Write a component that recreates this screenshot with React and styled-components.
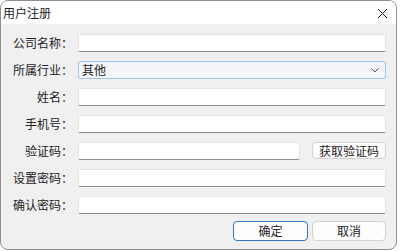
import { Fragment } from "react";
import styled, { createGlobalStyle } from "styled-components";

const Global = createGlobalStyle`
  html, body {
    margin: 0;
    padding: 0;
    background: #ffffff;
  }
  * {
    box-sizing: border-box;
  }
`;

const Window = styled.div`
  width: 397px;
  height: 250px;
  border: 1px solid #8e8e8e;
  border-radius: 8px;
  overflow: hidden;
  display: flex;
  flex-direction: column;
  background: #f0f0f0;
  font-family: "Noto Sans CJK SC", "Noto Sans", sans-serif;
  font-size: 12px;
  color: #222222;
`;

const TitleBar = styled.div`
  height: 23px;
  background: #ffffff;
  display: flex;
  align-items: center;
  justify-content: space-between;
  padding: 0 0 0 2px;
  flex-shrink: 0;
`;

const Title = styled.span`
  font-size: 12px;
  line-height: 1;
  margin-top: 1px;
`;

const CloseBtn = styled.div`
  width: 27px;
  height: 23px;
  display: flex;
  align-items: center;
  justify-content: center;
  margin-top: 2px;
`;

const Body = styled.div`
  flex: 1;
  padding: 10px 10px 0 0;
  display: flex;
  flex-direction: column;
`;

const Form = styled.div`
  display: grid;
  grid-template-columns: 77px 1fr;
  grid-auto-rows: 18px;
  row-gap: 9px;
`;

const Label = styled.label`
  display: flex;
  align-items: center;
  justify-content: flex-end;
  padding-right: 5px;
  white-space: nowrap;
  line-height: 1;
`;

const Field = styled.div`
  height: 18px;
  background: #ffffff;
  border: 1px solid #e3e3e3;
  border-bottom-color: #8c8c8c;
  border-radius: 2px;
`;

const Select = styled.div`
  height: 18px;
  background: #f3f5f8;
  border: 1px solid #9fc6e6;
  border-radius: 2px;
  display: flex;
  align-items: center;
  justify-content: space-between;
  padding: 0 6px 0 3px;
  line-height: 1;
`;

const CodeRow = styled.div`
  display: flex;
  align-items: flex-start;
  gap: 12px;
  ${Field} {
    flex: 1;
  }
`;

const Button = styled.div`
  width: ${(p) => p.$w || 74}px;
  height: ${(p) => p.$h || 18}px;
  background: #fdfdfd;
  border: 1px solid ${(p) => (p.$primary ? "#2f78c4" : "#d2d2d2")};
  border-radius: 4px;
  display: flex;
  align-items: center;
  justify-content: center;
  line-height: 1;
  flex-shrink: 0;
`;

const Actions = styled.div`
  display: flex;
  justify-content: flex-end;
  gap: 4px;
  margin-top: 7px;
`;

const rows = [
  ["公司名称：", "input"],
  ["所属行业：", "select"],
  ["姓名：", "input"],
  ["手机号：", "input"],
  ["验证码：", "code"],
  ["设置密码：", "input"],
  ["确认密码：", "input"],
];

function App() {
  return (
    <>
      <Global />
      <Window>
        <TitleBar>
          <Title>用户注册</Title>
          <CloseBtn>
            <svg width="11" height="11" viewBox="0 0 11 11">
              <path d="M1 1 L10 10 M10 1 L1 10" stroke="#1b1b1b" strokeWidth="1" fill="none" />
            </svg>
          </CloseBtn>
        </TitleBar>
        <Body>
          <Form>
            {rows.map(([label, kind]) => (
              <Fragment key={label}>
                <Label>{label}</Label>
                {kind === "input" && <Field />}
                {kind === "select" && (
                  <Select>
                    <span>其他</span>
                    <svg width="8" height="5" viewBox="0 0 8 5">
                      <path d="M0.5 0.5 L4 4 L7.5 0.5" stroke="#555" strokeWidth="1" fill="none" />
                    </svg>
                  </Select>
                )}
                {kind === "code" && (
                  <CodeRow>
                    <Field />
                    <Button $w={74} $h={17}>获取验证码</Button>
                  </CodeRow>
                )}
              </Fragment>
            ))}
          </Form>
          <Actions>
            <Button $primary $w={75} $h={20}>确定</Button>
            <Button $w={74} $h={20}>取消</Button>
          </Actions>
        </Body>
      </Window>
    </>
  );
}

export default App;
